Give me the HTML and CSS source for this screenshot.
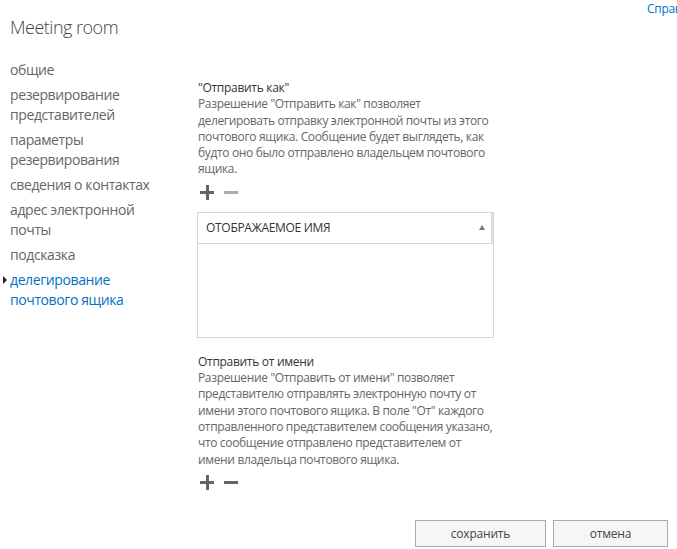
FILE: index.html
```html
<!DOCTYPE html>
<html lang="ru">
<head>
    <meta charset="UTF-8">
    <title>Meeting room</title>
    <link rel="stylesheet" href="styles.css">
</head>
<body>

    <div class="topbar">
        <h1 class="title">Meeting room</h1>
        <a class="help" href="#">Справка</a>
    </div>

    <div class="main">
        <ul class="nav">
            <li class="nav-item"><span class="marker"></span><span>общие</span></li>
            <li class="nav-item"><span class="marker"></span><span>резервирование представителей</span></li>
            <li class="nav-item"><span class="marker"></span><span>параметры резервирования</span></li>
            <li class="nav-item"><span class="marker"></span><span>сведения о контактах</span></li>
            <li class="nav-item"><span class="marker"></span><span>адрес электронной почты</span></li>
            <li class="nav-item"><span class="marker"></span><span>подсказка</span></li>
            <li class="nav-item active"><span class="marker"></span><span>делегирование почтового ящика</span></li>
        </ul>

        <div class="content">
            <div class="section">
                <div class="section-title">"Отправить как"</div>
                <div class="section-text">Разрешение "Отправить как" позволяет делегировать отправку электронной почты из этого почтового ящика. Сообщение будет выглядеть, как будто оно было отправлено владельцем почтового ящика.</div>
                <div class="tools">
                    <span class="plus"></span>
                    <span class="minus disabled"></span>
                </div>
                <div class="grid">
                    <div class="grid-head">
                        <span>ОТОБРАЖАЕМОЕ ИМЯ</span>
                        <span class="sort-up"></span>
                    </div>
                    <div class="grid-body"></div>
                </div>
            </div>

            <div class="section second">
                <div class="section-title">Отправить от имени</div>
                <div class="section-text">Разрешение "Отправить от имени" позволяет представителю отправлять электронную почту от имени этого почтового ящика. В поле "От" каждого отправленного представителем сообщения указано, что сообщение отправлено представителем от имени владельца почтового ящика.</div>
                <div class="tools">
                    <span class="plus"></span>
                    <span class="minus"></span>
                </div>
            </div>
        </div>
    </div>

    <div class="footer">
        <button type="button" class="btn btn-save">сохранить</button>
        <button type="button" class="btn btn-cancel">отмена</button>
    </div>

</body>
</html>
```

FILE: styles.css
```css
body {
    margin: 0;
    font-family: 'Open Sans', 'Noto Sans', sans-serif;
    font-size: 12px;
    letter-spacing: -0.3px;
    color: #444;
    background: #fff;
    overflow: hidden;
    width: 677px;
    height: 549px;
    display: flex;
    flex-direction: column;
}

.topbar {
    display: flex;
    justify-content: space-between;
    align-items: flex-start;
    width: 700px;
    height: 52px;
    flex: none;
}

.title {
    margin: 15px 0 0 10px;
    font-size: 18px;
    font-weight: 300;
    line-height: 24px;
    letter-spacing: -0.5px;
    color: #444;
}

.help {
    margin-top: 1px;
    width: 53px;
    font-size: 12px;
    line-height: 16px;
    color: #0072c6;
    text-decoration: none;
}

.main {
    display: flex;
}

/* left navigation */
.nav {
    list-style: none;
    margin: 0;
    padding: 8px 0 0 3px;
    width: 195px;
}

.nav-item {
    display: flex;
    align-items: flex-start;
    font-size: 14px;
    line-height: 20px;
    letter-spacing: -0.4px;
    color: #666;
    margin-bottom: 5px;
}

.marker {
    flex: none;
    width: 7px;
    height: 20px;
    position: relative;
}

.nav-item > span + span {
    width: 150px;
}

.nav-item.active {
    color: #0072c6;
}

.nav-item.active .marker::before {
    content: "";
    position: absolute;
    left: 0;
    top: 6px;
    border-left: 4px solid #222;
    border-top: 4px solid transparent;
    border-bottom: 4px solid transparent;
}

/* right content */
.content {
    width: 296px;
    padding-top: 28px;
}

.section-title {
    color: #333;
    line-height: 16.3px;
}

.section-text {
    color: #666;
    line-height: 16.3px;
    width: 302px;
    letter-spacing: -0.35px;
}

.tools {
    display: flex;
    gap: 10px;
    margin: 9px 0 0 2px;
    height: 11px;
}

.plus, .minus {
    position: relative;
    width: 14px;
    height: 11px;
}

.plus::before, .plus::after, .minus::before {
    content: "";
    position: absolute;
    background: #666;
}

.plus::before {
    left: 0;
    top: 4px;
    width: 14px;
    height: 3px;
}

.plus::after {
    left: 6px;
    top: -2px;
    width: 3px;
    height: 15px;
}

.minus::before {
    left: 0;
    top: 4px;
    width: 14px;
    height: 3px;
}

.minus.disabled::before {
    background: #a6b0b4;
}

.grid {
    margin-top: 14px;
    margin-left: -1px;
    border: 1px solid #d4d4d4;
    height: 124px;
}

.grid-head {
    display: flex;
    justify-content: space-between;
    align-items: center;
    height: 30px;
    padding-left: 8px;
    border-bottom: 1px solid #d4d4d4;
    color: #333;
    font-size: 12px;
}

.sort-up {
    width: 12px;
    height: 30px;
    border-right: 2px solid #e0e0e0;
    position: relative;
}

.sort-up::before {
    content: "";
    position: absolute;
    left: 0;
    top: 12px;
    border-bottom: 5px solid #777;
    border-left: 3.5px solid transparent;
    border-right: 3.5px solid transparent;
}

.second {
    margin-top: 16px;
}

/* buttons */
.footer {
    display: flex;
    justify-content: flex-end;
    gap: 7px;
    padding-right: 9px;
    margin-top: auto;
    margin-bottom: 2px;
}

.btn {
    height: 27px;
    font-family: 'Open Sans', 'Noto Sans', sans-serif;
    font-size: 12px;
    letter-spacing: -0.2px;
    color: #444;
    background: #f6f6f6;
    border: 1px solid #ababab;
    padding: 0;
}

.btn-save {
    width: 131px;
}

.btn-cancel {
    width: 115px;
}
```
